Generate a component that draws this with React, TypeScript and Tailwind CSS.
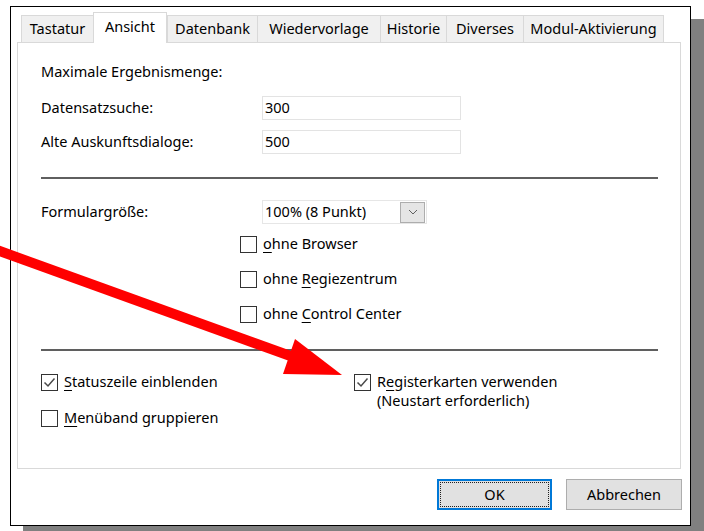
import React from 'react';

const tabs = [
  { label: 'Tastatur', w: 72 },
  { label: 'Ansicht', w: 74, active: true },
  { label: 'Datenbank', w: 90 },
  { label: 'Wiedervorlage', w: 123 },
  { label: 'Historie', w: 66 },
  { label: 'Diverses', w: 77 },
  { label: 'Modul-Aktivierung', w: 141 },
];

// label with one underlined accelerator letter
function Acc({ text, at }: { text: string; at: number }) {
  return (
    <span>
      {text.slice(0, at)}
      <span className="underline underline-offset-[3px] decoration-1">{text[at]}</span>
      {text.slice(at + 1)}
    </span>
  );
}

function CheckBox({ checked }: { checked?: boolean }) {
  return (
    <div className="w-[17px] h-[17px] border border-[#333333] bg-white shrink-0 flex items-center justify-center">
      {checked && (
        <svg width="15" height="15" viewBox="0 0 15 15">
          <path d="M2.5 7.5 L6 11 L12.5 3.5" fill="none" stroke="#4a4a4a" strokeWidth="1.5" />
        </svg>
      )}
    </div>
  );
}

function Field({ value }: { value: string }) {
  return (
    <div className="w-[199px] h-[24px] border border-[#e3e3e3] bg-white flex items-center pl-[2px]">
      {value}
    </div>
  );
}

export default function App() {
  return (
    <div
      className="relative w-[704px] h-[531px] bg-white overflow-hidden text-[14.5px] text-black"
      style={{ fontFamily: '"Noto Sans", "Open Sans", sans-serif' }}
    >
      <div className="pt-[6px] pl-[10px]">
        <div className="w-[681px] h-[520px] border border-black bg-white shadow-[13px_13px_0_#808080] flex flex-col">
          {/* tab strip */}
          <div className="flex items-end mt-[5px] pl-[10px] h-[30px] relative z-10">
            {tabs.map((t, i) =>
              t.active ? (
                <div
                  key={t.label}
                  className="h-[31px] -mb-px bg-white border border-b-0 border-[#d9d9d9] flex items-center justify-center pb-[3px]"
                  style={{ width: t.w }}
                >
                  {t.label}
                </div>
              ) : (
                <div
                  key={t.label}
                  className={`h-[27px] bg-[#f0f0f0] border-t border-l border-[#d9d9d9] flex items-center justify-center ${
                    i === tabs.length - 1 ? 'border-r' : ''
                  }`}
                  style={{ width: t.w }}
                >
                  {t.label}
                </div>
              )
            )}
          </div>

          {/* tab page */}
          <div className="ml-[6px] w-[664px] h-[427px] border border-[#d9d9d9] bg-white pl-[23px] flex flex-col">
            <div className="mt-[17px] h-[24px] flex items-center">Maximale Ergebnismenge:</div>
            <div className="mt-[12px] h-[24px] flex items-center">
              <div className="w-[221px]">Datensatzsuche:</div>
              <Field value="300" />
            </div>
            <div className="mt-[10px] h-[24px] flex items-center">
              <div className="w-[221px]">Alte Auskunftsdialoge:</div>
              <Field value="500" />
            </div>

            <div className="mt-[23px] w-[617px] h-[2px] bg-[#5f5f5f]" />

            <div className="mt-[21px] h-[24px] flex items-center">
              <div className="w-[221px]">Formulargröße:</div>
              <div className="w-[165px] h-[24px] border border-[#e6e6e6] bg-white flex items-center justify-between pl-[2px] pr-px">
                <span>100% (8 Punkt)</span>
                <div className="w-[25px] h-[21px] bg-[#e5e5e5] border border-[#adadad] flex items-center justify-center">
                  <svg width="10" height="6" viewBox="0 0 10 6">
                    <path d="M1 1 L5 5 L9 1" fill="none" stroke="#606060" strokeWidth="1" />
                  </svg>
                </div>
              </div>
            </div>

            <div className="mt-[8px] ml-[199px] h-[24px] flex items-center gap-[6px]">
              <CheckBox />
              <Acc text="ohne Browser" at={0} />
            </div>
            <div className="mt-[11px] ml-[199px] h-[24px] flex items-center gap-[6px]">
              <CheckBox />
              <Acc text="ohne Regiezentrum" at={5} />
            </div>
            <div className="mt-[11px] ml-[199px] h-[24px] flex items-center gap-[6px]">
              <CheckBox />
              <Acc text="ohne Control Center" at={5} />
            </div>

            <div className="mt-[23px] w-[617px] h-[2px] bg-[#5f5f5f]" />

            <div className="mt-[19px] flex">
              <div className="w-[313px] flex flex-col">
                <div className="h-[24px] flex items-center gap-[6px]">
                  <CheckBox checked />
                  <Acc text="Statuszeile einblenden" at={0} />
                </div>
                <div className="mt-[12px] h-[24px] flex items-center gap-[6px]">
                  <CheckBox />
                  <Acc text="Menüband gruppieren" at={0} />
                </div>
              </div>
              <div className="flex flex-col">
                <div className="h-[24px] flex items-center gap-[6px]">
                  <CheckBox checked />
                  <Acc text="Registerkarten verwenden" at={1} />
                </div>
                <div className="pl-[23px] -mt-[4px] leading-[20px]">(Neustart erforderlich)</div>
              </div>
            </div>
          </div>

          {/* dialog buttons */}
          <div className="mt-[10px] flex justify-end gap-[14px] pr-[8px]">
            <button className="w-[115px] h-[31px] bg-[#e1e1e1] border-2 border-[#0078d7] p-[1px]">
              <div className="w-full h-full border border-dotted border-[#202020] flex items-center justify-center">
                OK
              </div>
            </button>
            <button className="w-[116px] h-[31px] bg-[#e1e1e1] border border-[#adadad] flex items-center justify-center">
              Abbrechen
            </button>
          </div>
        </div>
      </div>

      {/* red annotation arrow */}
      <svg
        className="absolute left-0 top-0 pointer-events-none"
        width="704"
        height="531"
        viewBox="0 0 704 531"
      >
        <line x1="-6" y1="249" x2="296" y2="358" stroke="#ff0000" strokeWidth="10" />
        <polygon points="295,339 342,375 283,374" fill="#ff0000" />
      </svg>
    </div>
  );
}
